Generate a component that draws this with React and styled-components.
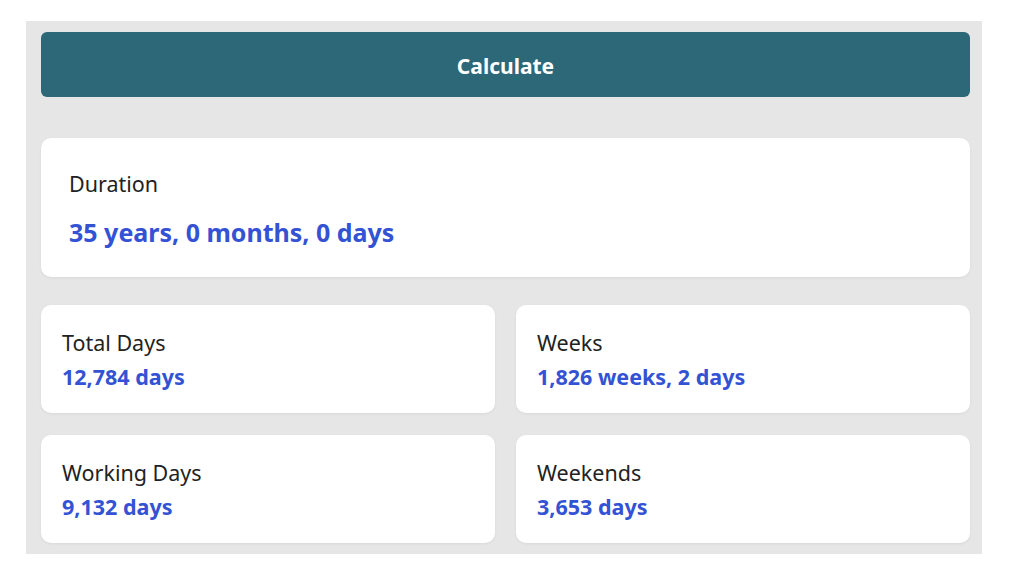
import React from "react";
import styled, { createGlobalStyle } from "styled-components";

const Global = createGlobalStyle`
  html, body { margin: 0; padding: 0; background: #ffffff; }
  body { font-family: "Noto Sans", "Open Sans", sans-serif; }
`;

const Page = styled.div`
  padding: 21px 0 0 26px;
`;

const Panel = styled.div`
  width: 956px;
  height: 533px;
  box-sizing: border-box;
  background: #e6e6e6;
  padding: 11px 12px 0 15px;
  display: flex;
  flex-direction: column;
  overflow: hidden;
`;

const Button = styled.button`
  height: 65px;
  border: none;
  border-radius: 6px;
  background: #2c6878;
  color: #ffffff;
  font-family: inherit;
  font-size: 21px;
  font-weight: 700;
  padding: 3px 0 0;
  cursor: pointer;
  margin-bottom: 41px;
`;

const Card = styled.div`
  background: #ffffff;
  border-radius: 10px;
  box-shadow: 0 1px 3px rgba(0, 0, 0, 0.06);
  box-sizing: border-box;
  display: flex;
  flex-direction: column;
  padding: ${(p) => (p.$big ? "32px 28px 28px" : "24px 21px 22px")};
  height: ${(p) => (p.$big ? "139px" : "108px")};
`;

const Label = styled.div`
  font-size: 21.5px;
  line-height: 28px;
  color: #222222;
`;

const Value = styled.div`
  font-weight: 700;
  color: #3352d4;
  font-size: ${(p) => (p.$big ? "25px" : "21.5px")};
  line-height: ${(p) => (p.$big ? "34px" : "28px")};
  margin-top: ${(p) => (p.$big ? "17px" : "6px")};
`;

const Grid = styled.div`
  margin-top: 28px;
  display: grid;
  grid-template-columns: 1fr 1fr;
  column-gap: 21px;
  row-gap: 22px;
`;

const items = [
  ["Total Days", "12,784 days"],
  ["Weeks", "1,826 weeks, 2 days"],
  ["Working Days", "9,132 days"],
  ["Weekends", "3,653 days"],
];

export default function App() {
  return (
    <Page>
      <Global />
      <Panel>
        <Button>Calculate</Button>
        <Card $big>
          <Label>Duration</Label>
          <Value $big>35 years, 0 months, 0 days</Value>
        </Card>
        <Grid>
          {items.map(([l, v]) => (
            <Card key={l}>
              <Label>{l}</Label>
              <Value>{v}</Value>
            </Card>
          ))}
        </Grid>
      </Panel>
    </Page>
  );
}
